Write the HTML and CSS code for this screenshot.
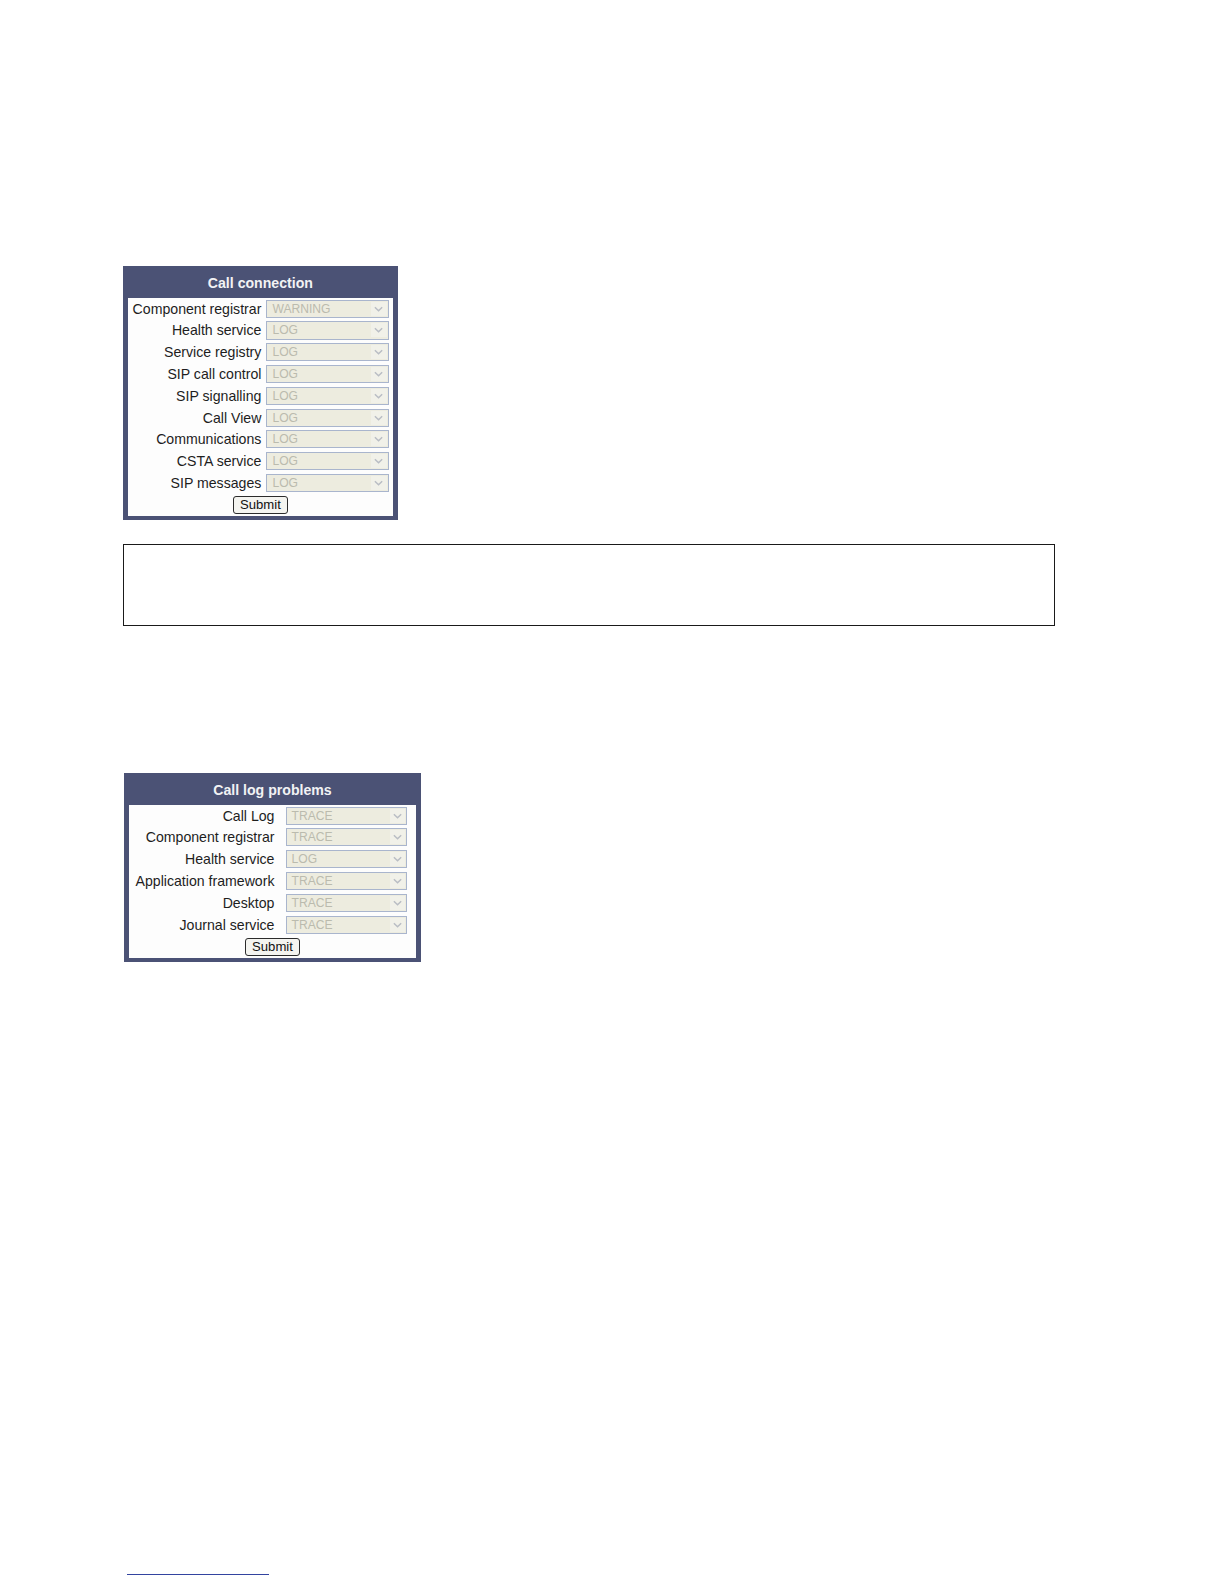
FILE: index.html
```html
<!DOCTYPE html>
<html>
<head>
<meta charset="utf-8">
<link rel="stylesheet" href="styles.css">
</head>
<body>
<div class="page">
  <div class="panel panel-a">
    <div class="panel-title">Call connection</div>
    <div class="panel-body">
      <div class="rows">
        <div class="lbl">Component registrar</div><div class="sel"><span>WARNING</span><i class="arr"><svg viewBox="0 0 10 6" width="9" height="6"><path d="M1 1 L5 5 L9 1" fill="none" stroke="#b9bdc4" stroke-width="1.6"/></svg></i></div>
        <div class="lbl">Health service</div><div class="sel"><span>LOG</span><i class="arr"><svg viewBox="0 0 10 6" width="9" height="6"><path d="M1 1 L5 5 L9 1" fill="none" stroke="#b9bdc4" stroke-width="1.6"/></svg></i></div>
        <div class="lbl">Service registry</div><div class="sel"><span>LOG</span><i class="arr"><svg viewBox="0 0 10 6" width="9" height="6"><path d="M1 1 L5 5 L9 1" fill="none" stroke="#b9bdc4" stroke-width="1.6"/></svg></i></div>
        <div class="lbl">SIP call control</div><div class="sel"><span>LOG</span><i class="arr"><svg viewBox="0 0 10 6" width="9" height="6"><path d="M1 1 L5 5 L9 1" fill="none" stroke="#b9bdc4" stroke-width="1.6"/></svg></i></div>
        <div class="lbl">SIP signalling</div><div class="sel"><span>LOG</span><i class="arr"><svg viewBox="0 0 10 6" width="9" height="6"><path d="M1 1 L5 5 L9 1" fill="none" stroke="#b9bdc4" stroke-width="1.6"/></svg></i></div>
        <div class="lbl">Call View</div><div class="sel"><span>LOG</span><i class="arr"><svg viewBox="0 0 10 6" width="9" height="6"><path d="M1 1 L5 5 L9 1" fill="none" stroke="#b9bdc4" stroke-width="1.6"/></svg></i></div>
        <div class="lbl">Communications</div><div class="sel"><span>LOG</span><i class="arr"><svg viewBox="0 0 10 6" width="9" height="6"><path d="M1 1 L5 5 L9 1" fill="none" stroke="#b9bdc4" stroke-width="1.6"/></svg></i></div>
        <div class="lbl">CSTA service</div><div class="sel"><span>LOG</span><i class="arr"><svg viewBox="0 0 10 6" width="9" height="6"><path d="M1 1 L5 5 L9 1" fill="none" stroke="#b9bdc4" stroke-width="1.6"/></svg></i></div>
        <div class="lbl">SIP messages</div><div class="sel"><span>LOG</span><i class="arr"><svg viewBox="0 0 10 6" width="9" height="6"><path d="M1 1 L5 5 L9 1" fill="none" stroke="#b9bdc4" stroke-width="1.6"/></svg></i></div>
      </div>
      <div class="actions"><button class="btn" type="button">Submit</button></div>
    </div>
  </div>

  <div class="note-box"></div>

  <div class="panel panel-b">
    <div class="panel-title">Call log problems</div>
    <div class="panel-body">
      <div class="rows">
        <div class="lbl">Call Log</div><div class="sel"><span>TRACE</span><i class="arr"><svg viewBox="0 0 10 6" width="9" height="6"><path d="M1 1 L5 5 L9 1" fill="none" stroke="#b9bdc4" stroke-width="1.6"/></svg></i></div>
        <div class="lbl">Component registrar</div><div class="sel"><span>TRACE</span><i class="arr"><svg viewBox="0 0 10 6" width="9" height="6"><path d="M1 1 L5 5 L9 1" fill="none" stroke="#b9bdc4" stroke-width="1.6"/></svg></i></div>
        <div class="lbl">Health service</div><div class="sel"><span>LOG</span><i class="arr"><svg viewBox="0 0 10 6" width="9" height="6"><path d="M1 1 L5 5 L9 1" fill="none" stroke="#b9bdc4" stroke-width="1.6"/></svg></i></div>
        <div class="lbl">Application framework</div><div class="sel"><span>TRACE</span><i class="arr"><svg viewBox="0 0 10 6" width="9" height="6"><path d="M1 1 L5 5 L9 1" fill="none" stroke="#b9bdc4" stroke-width="1.6"/></svg></i></div>
        <div class="lbl">Desktop</div><div class="sel"><span>TRACE</span><i class="arr"><svg viewBox="0 0 10 6" width="9" height="6"><path d="M1 1 L5 5 L9 1" fill="none" stroke="#b9bdc4" stroke-width="1.6"/></svg></i></div>
        <div class="lbl">Journal service</div><div class="sel"><span>TRACE</span><i class="arr"><svg viewBox="0 0 10 6" width="9" height="6"><path d="M1 1 L5 5 L9 1" fill="none" stroke="#b9bdc4" stroke-width="1.6"/></svg></i></div>
      </div>
      <div class="actions"><button class="btn" type="button">Submit</button></div>
    </div>
  </div>

  <div class="foot-rule"></div>
</div>
</body>
</html>
```
FILE: styles.css
```css
html, body {
  margin: 0;
  padding: 0;
  background: #ffffff;
  height: 1584px;
  overflow: hidden;
}

.page {
  zoom: 1.0093;
  display: flex;
  flex-direction: column;
  align-items: flex-start;
  padding-left: 122px;
  padding-top: 264px;
  font-family: "Liberation Sans", Arial, sans-serif;
}

.panel {
  background: #4b5275;
  display: flex;
  flex-direction: column;
  box-sizing: border-box;
}

.panel-a {
  width: 272px;
}

.panel-b {
  width: 294px;
  margin-left: 1px;
  margin-top: 146px;
}

.panel-title {
  height: 31px;
  line-height: 35px;
  text-align: center;
  color: #f2f2f4;
  font-weight: bold;
  font-size: 14px;
}

.panel-body {
  background: #fdfdfd;
  margin: 0 5px 4px 5px;
  padding: 0 0 2px 0;
  display: flex;
  flex-direction: column;
}

.rows {
  display: grid;
  grid-auto-rows: 21.6px;
  align-items: center;
}

.panel-a .rows {
  grid-template-columns: 132px 121px;
  column-gap: 5px;
}

.panel-b .rows {
  grid-template-columns: 144px 120px;
  column-gap: 11px;
}

.lbl {
  text-align: right;
  font-size: 14px;
  color: #1e1e1e;
  white-space: nowrap;
}

.sel {
  height: 18px;
  box-sizing: border-box;
  border: 1px solid #a9b5cd;
  background: #edecdf;
  display: flex;
  align-items: center;
  justify-content: space-between;
}

.sel span {
  font-size: 12px;
  color: #bbbbae;
  padding-left: 5px;
}

.arr {
  width: 15px;
  height: 14px;
  margin-right: 1px;
  background: #f1f1e9;
  display: flex;
  align-items: center;
  justify-content: center;
}

.actions {
  display: flex;
  justify-content: center;
  margin-top: 2px;
}

.btn {
  font-family: "Liberation Sans", Arial, sans-serif;
  font-size: 13px;
  color: #111111;
  height: 18px;
  width: 54px;
  padding: 0;
  border: 1px solid #2b2b2b;
  border-radius: 3px;
  background: #f4f4f0;
  line-height: 16px;
}

.note-box {
  width: 923px;
  height: 81px;
  box-sizing: border-box;
  border: 1px solid #1a1a1a;
  margin-top: 24px;
}

.foot-rule {
  width: 141px;
  height: 1px;
  background: #3344a0;
  margin-left: 4px;
  margin-top: 607px;
}
```
